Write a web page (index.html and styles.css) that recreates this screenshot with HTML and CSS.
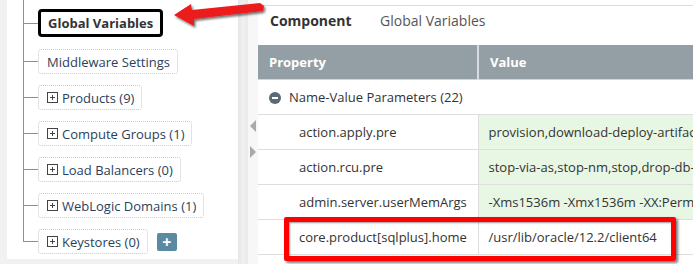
FILE: index.html
```html
<!DOCTYPE html>
<html lang="en">
<head>
    <meta charset="UTF-8">
    <title>Global Variables</title>
    <link rel="stylesheet" href="styles.css">
</head>
<body>
    <div class="sidebar">
        <ul class="tree">
            <li><span class="node selected">Global Variables</span></li>
            <li><span class="node">Middleware Settings</span></li>
            <li><span class="node"><span class="expand"></span>Products (9)</span></li>
            <li><span class="node"><span class="expand"></span>Compute Groups (1)</span></li>
            <li><span class="node"><span class="expand"></span>Load Balancers (0)</span></li>
            <li><span class="node"><span class="expand"></span>WebLogic Domains (1)</span></li>
            <li><span class="node"><span class="expand"></span>Keystores (0)</span><span class="add-button">+</span></li>
        </ul>
    </div>
    <div class="splitter"></div>
    <div class="toggle">
        <span class="arrow-left"></span>
        <span class="arrow-right"></span>
    </div>
    <div class="main">
        <div class="component-bar">
            <span class="label">Component</span>
            <span class="component-name">Global Variables</span>
        </div>
        <table class="props">
            <thead>
                <tr><th class="col-prop">Property</th><th>Value</th></tr>
            </thead>
            <tbody>
                <tr class="group">
                    <td><span class="collapse"></span>Name-Value Parameters (22)</td>
                    <td></td>
                </tr>
                <tr>
                    <td class="name">action.apply.pre</td>
                    <td class="value">provision,download-deploy-artifacts,stop</td>
                </tr>
                <tr>
                    <td class="name">action.rcu.pre</td>
                    <td class="value">stop-via-as,stop-nm,stop,drop-db-schemas</td>
                </tr>
                <tr>
                    <td class="name">admin.server.userMemArgs</td>
                    <td class="value">-Xms1536m -Xmx1536m -XX:PermSize=256m</td>
                </tr>
                <tr>
                    <td class="name">core.product[sqlplus].home</td>
                    <td class="value plain">/usr/lib/oracle/12.2/client64</td>
                </tr>
            </tbody>
        </table>
        <div class="highlight"></div>
    </div>

    <svg class="callout-arrow" width="110" height="34" viewBox="0 0 110 34">
        <defs>
            <filter id="shadow" x="-10%" y="-20%" width="130%" height="160%">
                <feDropShadow dx="1.5" dy="2" stdDeviation="1.2" flood-color="#000" flood-opacity="0.55"/>
            </filter>
        </defs>
        <polygon filter="url(#shadow)" fill="#ec1c1c"
                 points="4,14 21,3 22,9 90,2 94,5 93,10 24,18 24,25"/>
    </svg>
</body>
</html>
```

FILE: styles.css
```css
body {
    margin: 0;
    height: 264px;
    display: flex;
    background: #f1f1f1;
    font-family: "Open Sans", "DejaVu Sans", sans-serif;
    overflow: hidden;
}

.sidebar {
    width: 231px;
    margin-left: 7px;
    height: 259px;
    background: #fff;
}

.tree {
    list-style: none;
    margin: 0 0 0 16px;
    padding: 9px 0 0;
    position: relative;
}
.tree::before {
    content: "";
    position: absolute;
    left: 0;
    top: -2px;
    bottom: 13px;
    border-left: 1px solid #8f8f8f;
}
.tree li {
    display: flex;
    align-items: center;
    margin-bottom: 11px;
}
.tree li::before {
    content: "";
    width: 15px;
    height: 1px;
    background: #8f8f8f;
    margin-left: 0;
}
.tree li:first-child {
    margin-bottom: 12px;
}

.node {
    display: flex;
    align-items: center;
    height: 23px;
    padding: 0 7px 0 8px;
    border: 1px dotted #c8c8c8;
    border-radius: 3px;
    font-size: 13px;
    color: #2b3f5c;
    white-space: nowrap;
}
.node.selected {
    height: 22px;
    padding: 0 7px 0 7px;
    border: 3px solid #000;
    border-radius: 4px;
    font-weight: bold;
    color: #333;
}

.expand {
    width: 9px;
    height: 9px;
    border: 1px solid #444;
    margin-right: 4px;
    position: relative;
    flex-shrink: 0;
}
.expand::before,
.expand::after {
    content: "";
    position: absolute;
    background: #444;
}
.expand::before {
    left: 2px;
    top: 4px;
    width: 5px;
    height: 1px;
}
.expand::after {
    left: 4px;
    top: 2px;
    width: 1px;
    height: 5px;
}

.add-button {
    width: 20px;
    height: 18px;
    margin-left: 9px;
    background: #5a8aa0;
    border-radius: 2px;
    color: #fff;
    font-weight: bold;
    font-size: 16px;
    line-height: 18px;
    text-align: center;
}

.splitter {
    width: 10px;
    background: linear-gradient(to right, #e6e6e6, #f0f0f0 50%, #e9e9e9);
}

.toggle {
    width: 10px;
    background: #f7f7f7;
    display: flex;
    flex-direction: column;
    padding-top: 120px;
    box-sizing: border-box;
}
.arrow-left,
.arrow-right {
    width: 0;
    height: 0;
    border-top: 6px solid transparent;
    border-bottom: 6px solid transparent;
    margin-left: 2px;
}
.arrow-left {
    border-right: 6px solid #a9a9a9;
}
.arrow-right {
    border-left: 6px solid #a9a9a9;
    margin-top: 14px;
}

.main {
    flex: 1;
    background: #fff;
    padding-top: 5px;
    position: relative;
    min-width: 0;
}

.component-bar {
    border-top: 1px solid #dcdcdc;
    height: 40px;
    box-sizing: border-box;
    padding: 5px 12px 0;
    font-size: 14px;
    color: #444;
    display: flex;
}
.component-bar .label {
    font-weight: bold;
    color: #333;
    width: 110px;
}
.component-bar .component-name {
    color: #555;
}

.props {
    border-collapse: collapse;
    width: 100%;
    table-layout: fixed;
    font-size: 13px;
    color: #333;
}
.props th {
    height: 34px;
    background: #939fa5;
    color: #fff;
    text-align: left;
    font-size: 13px;
    padding: 0 11px;
    border-bottom: 1px solid #d6d6d6;
}
.props th.col-prop {
    width: 220px;
    box-sizing: border-box;
    border-right: 2px solid #d8dcde;
}
.props td {
    height: 34px;
    padding: 0 11px;
    border-bottom: 1px solid #dedede;
    white-space: nowrap;
    overflow: hidden;
}
.props td.name {
    padding-left: 41px;
}
.props td.value {
    background: #e8f6e4;
    border-left: 1px solid #dedede;
    padding-left: 10px;
}
.props td.value.plain {
    background: #fff;
}
.props .group td {
    padding-left: 11px;
}

.collapse {
    display: inline-block;
    width: 12px;
    height: 12px;
    border-radius: 50%;
    background: #5b6b76;
    vertical-align: -2px;
    margin-right: 8px;
    position: relative;
}
.collapse::after {
    content: "";
    position: absolute;
    left: 3px;
    top: 5px;
    width: 6px;
    height: 2px;
    background: #fff;
}

.highlight {
    position: absolute;
    left: 26px;
    top: 217px;
    width: 382px;
    height: 34px;
    border: 5px solid #f00;
    border-radius: 2px;
    box-shadow: 2px 2px 3px rgba(0, 0, 0, 0.55), inset 1px 1px 2px rgba(0, 0, 0, 0.4);
}

.callout-arrow {
    position: absolute;
    left: 170px;
    top: 1px;
}
```
